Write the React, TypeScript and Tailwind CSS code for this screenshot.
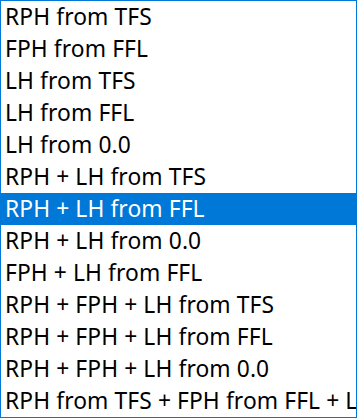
import React from "react";

const items = [
  "RPH from TFS",
  "FPH from FFL",
  "LH from TFS",
  "LH from FFL",
  "LH from 0.0",
  "RPH + LH from TFS",
  "RPH + LH from FFL",
  "RPH + LH from 0.0",
  "FPH + LH from FFL",
  "RPH + FPH + LH from TFS",
  "RPH + FPH + LH from FFL",
  "RPH + FPH + LH from 0.0",
  "RPH from TFS + FPH from FFL + LH from 0.0",
];

export default function App() {
  return (
    <div className="w-[357px] h-[418px] bg-white border border-[#0078d7] overflow-hidden" style={{ fontFamily: '"Noto Sans", "Open Sans", sans-serif' }}>
      {items.map((t, i) => (
        <div
          key={i}
          className={`h-[32px] flex items-center pl-[4px] pt-[1px] text-[22.8px] tracking-[0.1px] whitespace-nowrap ${i === 6 ? "bg-[#0078d7] text-white" : "text-black"}`}
        >
          {t}
        </div>
      ))}
    </div>
  );
}
